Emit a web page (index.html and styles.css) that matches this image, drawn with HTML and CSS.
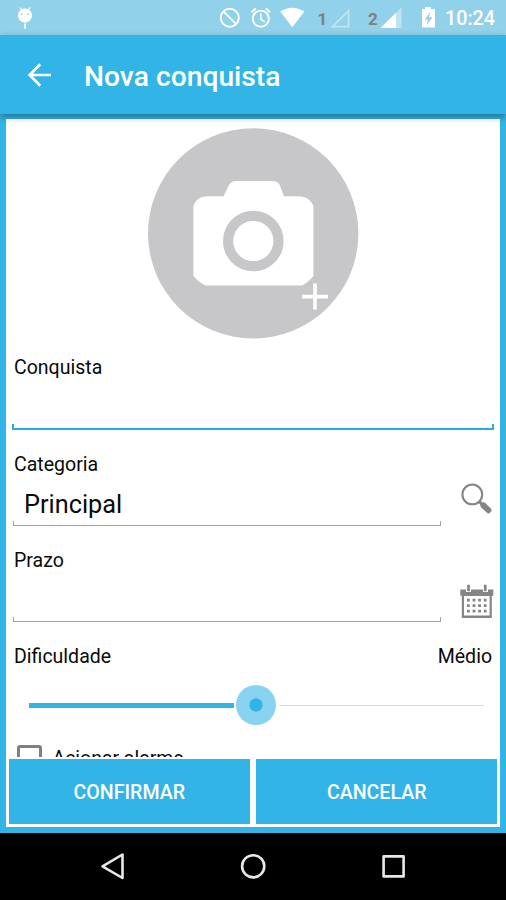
FILE: index.html
```html
<!DOCTYPE html>
<html lang="pt-BR">
<head>
<meta charset="utf-8">
<title>Nova conquista</title>
<link rel="stylesheet" href="styles.css">
</head>
<body>
<div class="screen">
  <div class="status">
    <svg class="droid" width="16" height="24" viewBox="0 0 16 24" fill="#fff">
      <path d="M3 2.5 5 5.5M13 2.5 11 5.5" stroke="#fff" stroke-width="1.3"/>
      <circle cx="8" cy="10.6" r="7.1"/><rect x="7" y="18.5" width="2" height="5"/>
      <circle cx="5" cy="9.2" r=".9" fill="#92d1ea"/><circle cx="11" cy="9.2" r=".9" fill="#92d1ea"/>
    </svg>
    <svg class="indicators" width="226" height="35" viewBox="212 0 226 35" fill="none" stroke="#fff">
      <circle cx="229.8" cy="17.8" r="9" stroke-width="1.9"/>
      <path d="m223.4 11.4 12.8 12.8" stroke-width="1.9"/>
      <circle cx="260.8" cy="18.7" r="8.1" stroke-width="1.9"/>
      <path d="M260.8 13.5v5.7l4 2.4" stroke-width="1.6"/>
      <path d="m251.5 12.2 4.3-3.6M270.1 12.2l-4.3-3.6" stroke-width="2"/>
      <path d="M280.2 11.6Q292.2 3.8 304.4 11.6L292.3 27.3Z" fill="#fff" stroke="none"/>
      <path d="M332.5 26.7H348.6V10.7Z" stroke="#bee3f1" stroke-width="1.8"/>
      <path d="M380.5 28H401.5V7.4Z" fill="#bee3f1" stroke="none"/>
      <path d="M380.5 28H396V12.8Z" fill="#fff" stroke="none"/>
      <path d="M422 9h3V7h6v2h4v18.5h-13Z" fill="#fff" stroke="none"/>
      <path d="m430.3 11.8-5.6 8h3.3l-1.6 5.8 6-8.3h-3.5Z" fill="#92d1ea" stroke="none"/>
      <text class="sim" x="317.4" y="24.7">1</text>
      <text class="sim" x="368" y="24.7">2</text>
    </svg>
    <span class="clock">10:24</span>
  </div>
  <header class="appbar">
    <svg width="24" height="24" viewBox="0 0 24 24" fill="none" stroke="#fff" stroke-width="2.7"><path d="M13.2 1.3 2.7 12 13.2 22.7M2.7 12H24"/></svg>
    <h1>Nova conquista</h1>
  </header>
  <main class="frame">
    <div class="panel">
      <div class="form">
        <svg class="photo" width="212" height="212" viewBox="0 0 212 212">
          <circle cx="106.2" cy="106.4" r="105.2" fill="#c7c7c9"/>
          <path d="M46.4 79C49 72 54 69.3 61 69.3H76.5L82 58Q84.5 54 89 54H125Q130.5 54 132.5 57.5L137 69.3H151C159 69.3 164 73 166.4 79V149Q160 156.5 155 158.5H59Q52 155.5 46.4 149Z" fill="#fff"/>
          <circle cx="106.3" cy="114" r="25.2" fill="#fff" stroke="#c7c7c9" stroke-width="10.2"/>
          <path d="M168 156.6v26M155 169.6h26" stroke="#fff" stroke-width="3.7"/>
        </svg>
        <section class="field active">
          <label>Conquista</label>
          <div class="row"><div class="input"></div></div>
        </section>
        <section class="field">
          <label>Categoria</label>
          <div class="row">
            <div class="input">Principal</div>
            <svg class="icon" width="34" height="36" viewBox="0 0 34 36" fill="none" stroke="#858585">
              <circle cx="12.3" cy="11.4" r="9.9" stroke-width="2.1"/>
              <path d="m19.4 18.6 3.3 3.5" stroke-width="3"/>
              <path d="m23.5 22.5 4.9 4.7" stroke-width="6" stroke-linecap="round"/>
            </svg>
          </div>
        </section>
        <section class="field">
          <label>Prazo</label>
          <div class="row">
            <div class="input"></div>
            <svg class="icon" width="34" height="36" viewBox="0 0 34 36" fill="#858585">
              <path d="M.3 6.5H33.3V12.8H31.8V35H1.8V12.8H.3ZM4 13V32.6H29.6V13Z" fill-rule="evenodd"/>
              <path d="M6 1h5v8H6ZM23 1h5v8h-5Z" fill="#fff"/>
              <path d="M7.2 1.8h2.7v6.4H7.2ZM23.9 1.8h2.7v6.4H23.9Z"/>
              <path d="M7 17.2h20M7 22.6h20M7 28.2h20" stroke="#858585" stroke-width="2.8" stroke-dasharray="2.8 2.8"/>
            </svg>
          </div>
        </section>
        <div class="difficulty"><span>Dificuldade</span><span>Médio</span></div>
        <div class="slider"><div class="done"></div><div class="thumb"></div><div class="rest"></div></div>
        <div class="alarm"><span class="box"></span><span class="caption">Acionar alarme</span></div>
      </div>
      <div class="actions"><button>CONFIRMAR</button><button>CANCELAR</button></div>
    </div>
  </main>
  <nav class="navbar">
    <svg width="506" height="67" viewBox="0 833 506 67" fill="none" stroke="#e8e8e8" stroke-width="2.6" stroke-linejoin="round">
      <path d="M122.5 854.5V878L102.5 866.3Z"/>
      <circle cx="253.2" cy="866.3" r="11.1"/>
      <rect x="383.6" y="856.4" width="20" height="20"/>
    </svg>
  </nav>
</div>
</body>
</html>
```
FILE: styles.css
```css
*, *::after { box-sizing: border-box; }
body { margin: 0; font-family: Roboto, sans-serif; font-size: 19.55px; color: #0a0a0a; }
.screen { width: 506px; height: 900px; display: flex; flex-direction: column; overflow: hidden; background: #33b4e6; }
.status { height: 35px; flex: none; display: flex; align-items: center; background: #92d1ea; padding-left: 17px; }
.droid { margin-top: -1px; }
.indicators { margin-left: 179px; }
.sim { font-size: 17px; font-weight: 700; fill: #808080; stroke: none; }
.clock { margin-left: 7px; padding-top: 2px; color: #fff; font-size: 19.7px; font-weight: 500; line-height: 24px; }
.appbar { position: relative; height: 79px; flex: none; display: flex; align-items: center; padding-left: 27px; background: #33b4e6; box-shadow: 0 3px 7px rgba(0, 0, 0, .36); }
.appbar h1 { margin: 4px 0 0 33px; font-size: 28.25px; line-height: 34px; font-weight: 500; color: #fff; }
.appbar svg { flex: none; }
.frame { flex: 1; min-height: 0; padding: 5px 5.6px 6px; }
.panel { height: 100%; display: flex; flex-direction: column; background: #fff; padding: 7.5px 3px 3.3px; }
.form { height: 630px; flex: none; overflow: hidden; padding: 0 3.4px; }
.photo { display: block; margin: 0 auto; }
.field { height: 96.3px; }
.photo + .field { margin-top: 17px; }
.field label { display: block; height: 24px; line-height: 25px; padding-left: 2px; }
.active label { line-height: 24px; }
.row { display: flex; gap: 19px; height: 50px; }
.input { position: relative; flex: 1; margin-left: 1px; padding-left: 11px; font-size: 25.3px; line-height: 57px; }
.input::after { content: ""; position: absolute; left: 0; right: 0; bottom: 0; height: 5px; border: 1px solid #a3a3a3; border-top: 0; }
.active .input { margin-left: 0; }
.active .input::after { height: 6px; border: 2px solid #24afe0; border-top: 0; }
.icon { flex: none; margin-top: 7px; }
.field + .field + .field .icon { margin-top: 11px; }
.difficulty { display: flex; justify-content: space-between; line-height: 26px; height: 24px; padding: 0 2px; }
.slider { display: flex; align-items: center; height: 40px; margin: 17px 10px 0 17.5px; }
.done { width: 204.5px; height: 5px; background: #33b4e6; }
.thumb { width: 40px; height: 40px; margin: 0 2.5px; border-radius: 50%; background: radial-gradient(circle, #33b4e6 6.3px, #87d3f0 7px); }
.rest { flex: 1; height: 1.5px; background: #dadada; }
.alarm { display: flex; gap: 10.5px; margin: 19.3px 0 0 5px; line-height: 24px; font-size: 19.45px; }
.caption { padding-top: 2px; }
.box { width: 25px; height: 25px; border: 3px solid #808080; border-radius: 3px; }
.actions { display: grid; grid-template-columns: 1fr 1fr; gap: 6px; height: 65px; margin-top: auto; }
.actions button { border: 0; padding: 3px 0 0; background: #33b4e6; color: #fff; font: 500 19.6px Roboto, sans-serif; }
.navbar { height: 67px; flex: none; background: #000; }
.navbar svg { display: block; }
```
